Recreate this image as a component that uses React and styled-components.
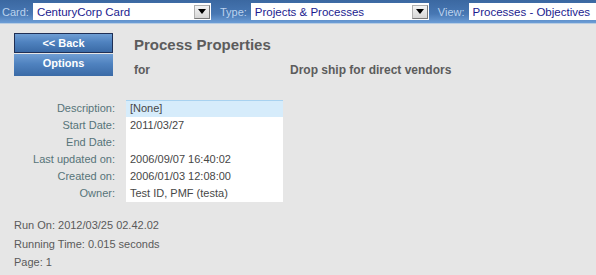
import React from 'react';
import styled, { createGlobalStyle } from 'styled-components';

const GlobalStyle = createGlobalStyle`
  html, body {
    margin: 0;
    padding: 0;
    background: #e6e6e6;
    font-family: 'Liberation Sans', Arial, sans-serif;
    overflow: hidden;
  }
`;

const details = [
  { label: 'Description:', value: '[None]', active: true },
  { label: 'Start Date:', value: '2011/03/27' },
  { label: 'End Date:', value: '' },
  { label: 'Last updated on:', value: '2006/09/07 16:40:02' },
  { label: 'Created on:', value: '2006/01/03 12:08:00' },
  { label: 'Owner:', value: 'Test ID, PMF (testa)' }
];

const DropArrow = () => (
  <svg width='8' height='5' viewBox='0 0 8 5'>
    <path d='M0 0 H8 L4 5 Z' fill='#000' />
  </svg>
);

const Picker = ({ value, width, arrow = true }) => (
  <Select width={width}>
    <SelectText>{value}</SelectText>
    {arrow && (
      <ArrowButton>
        <DropArrow />
      </ArrowButton>
    )}
  </Select>
);

const App = () => {
  return (
    <Page>
      <GlobalStyle />
      <TopBar>
        <BarLabel>Card:</BarLabel>
        <Picker value='CenturyCorp Card' width={178} />
        <BarLabel>Type:</BarLabel>
        <Picker value='Projects & Processes' width={178} />
        <BarLabel>View:</BarLabel>
        <Picker value='Processes - Objectives' width={140} arrow={false} />
      </TopBar>

      <Main>
        <Side>
          <BackButton>&lt;&lt; Back</BackButton>
          <OptionsButton>Options</OptionsButton>
        </Side>
        <Content>
          <Title>Process Properties</Title>
          <ForRow>
            <ForLabel>for</ForLabel>
            <span>Drop ship for direct vendors</span>
          </ForRow>
        </Content>
      </Main>

      <DetailGrid>
        {details.map((d) => (
          <React.Fragment key={d.label}>
            <DetailLabel>{d.label}</DetailLabel>
            <DetailValue $active={d.active}>{d.value}</DetailValue>
          </React.Fragment>
        ))}
      </DetailGrid>

      <Footer>
        <FooterLine>Run On: 2012/03/25 02.42.02</FooterLine>
        <FooterLine>Running Time: 0.015 seconds</FooterLine>
        <FooterLine>Page: 1</FooterLine>
      </Footer>
    </Page>
  );
};

const Page = styled.div`
  width: 596px;
  height: 275px;
  background: #e6e6e6;
`;

const TopBar = styled.div`
  display: flex;
  align-items: center;
  height: 23px;
  padding-left: 2px;
  background: linear-gradient(to bottom, #3b68a1 0%, #4777b3 60%, #6c9dd6 100%);
  border-bottom: 1px solid #b8cde3;
  white-space: nowrap;
  overflow: hidden;
`;

const BarLabel = styled.span`
  color: #bcd3ee;
  font-size: 11px;
  margin-right: 4px;
  margin-left: 9px;

  &:first-child {
    margin-left: 0;
  }
`;

const Select = styled.div`
  display: flex;
  align-items: center;
  flex-shrink: 0;
  width: ${(p) => p.width}px;
  height: 17px;
  background: #fff;
  box-sizing: border-box;
  padding-left: 4px;
  padding-right: 1px;
`;

const SelectText = styled.span`
  flex: 1;
  color: #1b1b8f;
  font-size: 11.5px;
`;

const ArrowButton = styled.div`
  display: flex;
  align-items: center;
  justify-content: center;
  width: 16px;
  height: 14px;
  box-sizing: border-box;
  background: linear-gradient(to bottom, #f4f4f4, #d6d6d6);
  border: 1px solid #7a7a7a;
  border-top-color: #b0b0b0;
  border-left-color: #b0b0b0;
`;

const Main = styled.div`
  display: flex;
  padding: 9px 0 0 14px;
`;

const Side = styled.div`
  display: flex;
  flex-direction: column;
  width: 99px;
  margin-right: 21px;
`;

const ButtonBase = styled.div`
  color: #fff;
  font-weight: bold;
  font-size: 11px;
  text-align: center;
  box-sizing: border-box;
  background: linear-gradient(to bottom, #6f9ed4 0%, #4f82bf 45%, #3a6aa6 100%);
`;

const BackButton = styled(ButtonBase)`
  height: 20px;
  line-height: 18px;
  border: 1px solid #1f2f55;
`;

const OptionsButton = styled(ButtonBase)`
  height: 22px;
  line-height: 19px;
  margin-top: 1px;
`;

const Content = styled.div`
  display: flex;
  flex-direction: column;
  color: #5c5c5c;
`;

const Title = styled.div`
  font-size: 15px;
  font-weight: bold;
  margin-top: 3px;
  height: 18px;
  line-height: 18px;
`;

const ForRow = styled.div`
  display: flex;
  font-size: 12px;
  font-weight: bold;
  margin-top: 9px;
`;

const ForLabel = styled.span`
  width: 156px;
`;

const DetailGrid = styled.div`
  display: grid;
  grid-template-columns: 115px 157px;
  column-gap: 11px;
  margin-top: 23px;
  font-size: 11px;
`;

const DetailLabel = styled.div`
  color: #567479;
  text-align: right;
  height: 17px;
  line-height: 17px;
`;

const DetailValue = styled.div`
  background: ${(p) => (p.$active ? '#d6ecfb' : '#fff')};
  border-top: ${(p) => (p.$active ? '1px solid #a8d2f0' : 'none')};
  color: #474747;
  height: ${(p) => (p.$active ? '16px' : '17px')};
  line-height: ${(p) => (p.$active ? '15px' : '17px')};
  padding-left: 4px;
`;

const Footer = styled.div`
  padding: 14px 0 0 14px;
  color: #5a5a5a;
  font-size: 11px;
`;

const FooterLine = styled.div`
  height: 18.5px;
  line-height: 18.5px;
`;

export default App;
